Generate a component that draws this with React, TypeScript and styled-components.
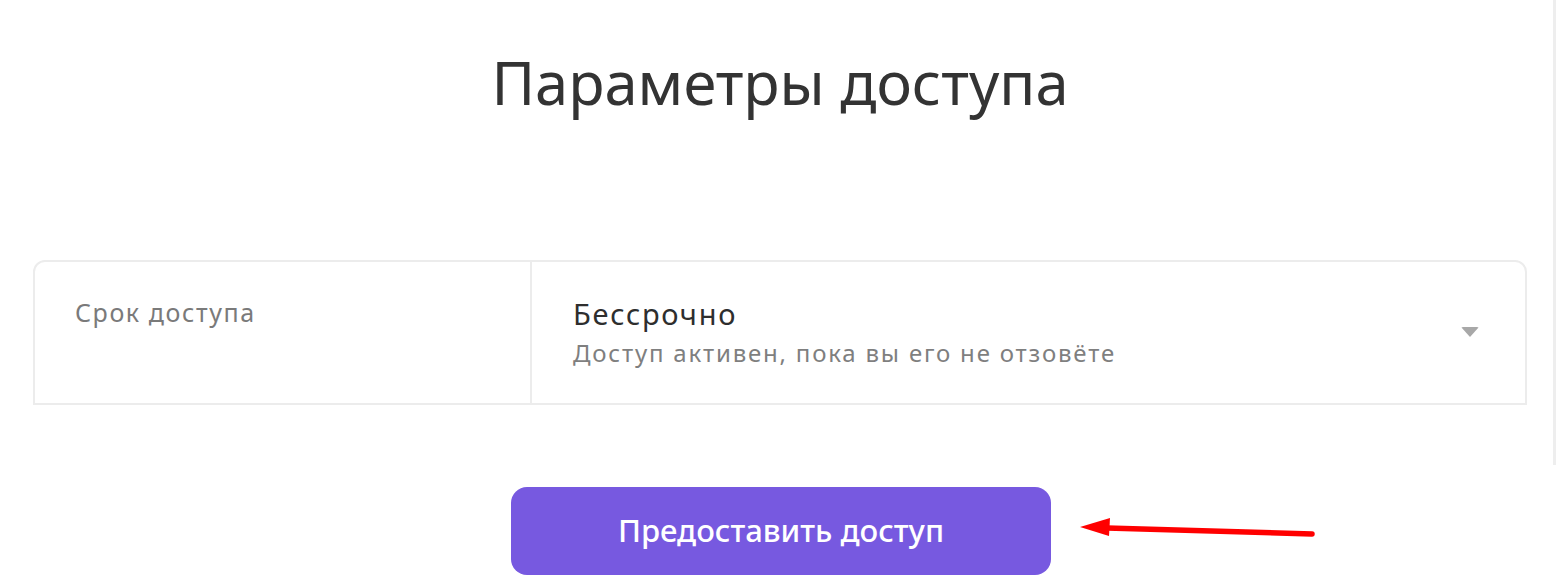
import React from 'react';
import styled, { createGlobalStyle } from 'styled-components';

const GlobalStyle = createGlobalStyle`
  html, body {
    margin: 0;
    padding: 0;
    background: #fff;
    font-family: 'Noto Sans', 'Open Sans', sans-serif;
    overflow: hidden;
  }
`;

const Page = styled.div`
  width: 1556px;
  height: 588px;
  display: flex;
  flex-direction: column;
`;

const Panel = styled.section`
  height: 465px;
  border-right: 3px solid #eeeeee;
  box-sizing: border-box;
  padding: 0 26px 0 33px; // card spans 33..1527
  display: flex;
  flex-direction: column;
`;

const Title = styled.h1`
  margin: 47px 0 0;
  text-align: center;
  font-size: 59.6px;
  font-weight: 400;
  line-height: 70px;
  color: #333;
`;

const Card = styled.div`
  margin-top: 143px;
  height: 145px;
  display: grid;
  grid-template-columns: 497px 1fr;
  border: 2px solid #ececec;
  border-radius: 12px 12px 0 0;
  box-sizing: border-box;
`;

const LabelCell = styled.div`
  border-right: 2px solid #ececec;
  padding: 34px 0 0 40px;
  font-size: 25px;
  line-height: 32px;
  letter-spacing: 1.6px;
  color: #7a7a7a;
`;

const ValueCell = styled.div`
  display: flex;
  align-items: center;
  justify-content: space-between;
  padding: 0 46px 0 41px;
`;

const ValueText = styled.div`
  display: flex;
  flex-direction: column;
  gap: 5px;
`;

const ValueTitle = styled.div`
  font-size: 29px;
  line-height: 36px;
  letter-spacing: 1.7px;
  color: #2e2e2e;
`;

const ValueHint = styled.div`
  font-size: 24px;
  line-height: 32px;
  letter-spacing: 1.8px;
  color: #7f7f7f;
`;

const Caret = styled.span`
  width: 0;
  height: 0;
  border-left: 9px solid transparent;
  border-right: 9px solid transparent;
  border-top: 10px solid #a8a8a8;
  border-radius: 2px;
  margin-top: -2px;
`;

const Footer = styled.div`
  display: flex;
  align-items: center;
  padding: 22px 0 0 511px;
  gap: 28px;
`;

const GrantButton = styled.button`
  width: 540px;
  height: 88px;
  border: none;
  border-radius: 16px;
  background: #7759e0;
  color: #fff;
  font-family: inherit;
  font-size: 31px;
  font-weight: 500;
  cursor: pointer;
  padding: 0 0 2px;
`;

const Arrow = () => (
  <svg width="240" height="24" viewBox="0 0 240 24" style={{ marginTop: -2 }}>
    <line x1="28" y1="10" x2="233" y2="16" stroke="#ff0000" strokeWidth="5.5" strokeLinecap="round" />
    <polygon points="1,9 31,0 30,18" fill="#ff0000" />
  </svg>
);

export default function App() {
  return (
    <Page>
      <GlobalStyle />
      <Panel>
        <Title>Параметры доступа</Title>
        <Card>
          <LabelCell>Срок доступа</LabelCell>
          <ValueCell>
            <ValueText>
              <ValueTitle>Бессрочно</ValueTitle>
              <ValueHint>Доступ активен, пока вы его не отзовёте</ValueHint>
            </ValueText>
            <Caret />
          </ValueCell>
        </Card>
      </Panel>
      <Footer>
        <GrantButton>Предоставить доступ</GrantButton>
        <Arrow />
      </Footer>
    </Page>
  );
}
